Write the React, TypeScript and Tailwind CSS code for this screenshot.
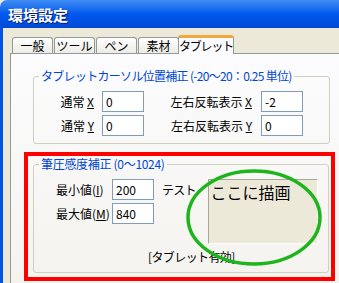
import React from 'react';

const font = { fontFamily: '"Noto Sans CJK JP", "Liberation Sans", sans-serif' };

const Field = ({ value }: { value: string }) => (
    <div className="w-[42px] h-[21px] shrink-0 border border-[#7F9DB9] bg-white pl-[3px] text-[12px] leading-[19px] text-black">
        {value}
    </div>
);

const Tab = ({ label }: { label: string }) => (
    <div className="w-[41px] h-[16px] mr-[1px] border border-b-0 border-[#919B9C] rounded-t-[3px] bg-gradient-to-b from-white to-[#ECEBE6] text-[12px] leading-[15px] text-center text-black whitespace-nowrap">
        {label}
    </div>
);

export default function App() {
    return (
        <div className="relative w-[339px] h-[283px] overflow-hidden bg-[#ECE9D8]" style={font}>
            {/* Title bar */}
            <div className="h-[28px] rounded-tl-[7px] bg-gradient-to-b from-[#3F8CF3] via-[#0058EE] to-[#004AD6] flex items-center pl-[8px]">
                <span className="text-white font-bold text-[15px] leading-none [text-shadow:1px_1px_0_#0A1E6E]">環境設定</span>
            </div>

            <div className="flex h-[255px]">
                <div className="w-[3px] bg-[#0055E5]" />
                <div className="flex-1 pl-[7px] pt-[7px] flex flex-col">
                    {/* Tabs */}
                    <div className="h-[18px] flex items-end pl-[2px]">
                        <Tab label="一般" />
                        <Tab label="ツール" />
                        <Tab label="ペン" />
                        <Tab label="素材" />
                        <div className="relative z-10 -ml-[2px] w-[56px] h-[19px] -mb-[1px] border-x border-[#919B9C] rounded-t-[3px] bg-[#FCFCFE] border-t-[3px] border-t-[#F5A83A] text-[12px] leading-[15px] tracking-[-1.2px] text-center text-black whitespace-nowrap">
                            タブレット
                        </div>
                    </div>

                    {/* Panel */}
                    <div className="flex-1 border-l border-t border-[#919B9C] bg-gradient-to-b from-[#FCFCFE] to-[#F4F3EE] pl-[22px] pt-[15px]">
                        <fieldset className="w-[297px] border border-[#D0D0BF] rounded-[3px] px-0 pt-[8px] pb-[7px]">
                            <legend className="ml-[5px] px-[2px] text-[12px] leading-[14px] tracking-[-0.7px] text-[#0046D5]">
                                タブレットカーソル位置補正 (-20〜20：0.25 単位)
                            </legend>
                            <div className="flex flex-col gap-[3px] text-[12px] text-black">
                                <div className="flex items-center h-[21px]">
                                    <span className="w-[64px] text-right pr-[4px]">通常 <span className="underline">X</span></span>
                                    <span className="ml-[4px]"><Field value="0" /></span>
                                    <span className="w-[113px] text-right pr-[5px]">左右反転表示 <span className="underline">X</span></span>
                                    <span className="ml-[4px]"><Field value="-2" /></span>
                                </div>
                                <div className="flex items-center h-[21px]">
                                    <span className="w-[64px] text-right pr-[4px]">通常 <span className="underline">Y</span></span>
                                    <span className="ml-[4px]"><Field value="0" /></span>
                                    <span className="w-[113px] text-right pr-[5px]">左右反転表示 <span className="underline">Y</span></span>
                                    <span className="ml-[4px]"><Field value="0" /></span>
                                </div>
                            </div>
                        </fieldset>

                        <fieldset className="mt-[13px] w-[296px] border border-[#D0D0BF] rounded-[3px] px-0 pt-[8px] pb-[8px]">
                            <legend className="ml-[5px] px-[2px] text-[12px] leading-[14px] tracking-[-0.3px] text-[#0046D5]">
                                筆圧感度補正 (0〜1024)
                            </legend>
                            <div className="flex flex-col">
                                <div className="flex items-start h-[65px] text-[12px] text-black">
                                    <div className="flex flex-col gap-[3px] pl-[22px]">
                                        <div className="flex items-center h-[21px]">
                                            <span className="w-[56px]">最小値(<span className="underline">I</span>)</span>
                                            <Field value="200" />
                                        </div>
                                        <div className="flex items-center h-[21px]">
                                            <span className="w-[56px]">最大値(<span className="underline">M</span>)</span>
                                            <Field value="840" />
                                        </div>
                                    </div>
                                    <span className="ml-[8px] mt-[4px] leading-[14px] tracking-[-0.8px]">テスト</span>
                                    <div className="ml-[12px] w-[110px] h-[65px] shrink-0 border-l border-t border-[#A7A69A] border-r border-b border-r-white border-b-white bg-[#ECE9D8] pl-[2px] pt-[2px] text-[16px] leading-[20px]">
                                        ここに描画
                                    </div>
                                </div>
                                <div className="mt-[6px] ml-[114px] h-[14px] text-[12px] leading-[14px] tracking-[-0.6px] text-black">[タブレット有効]</div>
                            </div>
                        </fieldset>
                    </div>
                </div>
            </div>

            {/* Annotations */}
            <div className="absolute left-[24px] top-[152px] w-[311px] h-[129px] border-[4px] border-[#FF0000]" />
            <svg className="absolute left-[186px] top-[169px]" width="136" height="97" viewBox="0 0 136 97">
                <ellipse cx="68" cy="48.5" rx="66" ry="46.5" fill="none" stroke="#1DB41D" strokeWidth="3.5" />
            </svg>
        </div>
    );
}
